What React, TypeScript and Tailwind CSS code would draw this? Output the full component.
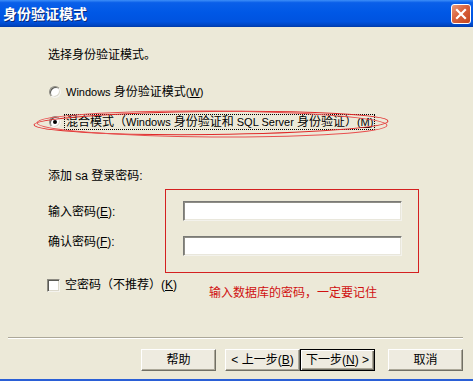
import React from "react";

const font = { fontFamily: '"Liberation Sans", "Noto Sans CJK SC", sans-serif' };

function Radio({ checked }: { checked?: boolean }) {
  return (
    <span className="relative w-[12px] h-[12px] shrink-0 rounded-full bg-white border border-t-[#8d8b82] border-l-[#8d8b82] border-r-[#f4f3ee] border-b-[#f4f3ee] shadow-[inset_1px_1px_0_#5a5a55,inset_-1px_-1px_0_#dcd9cc]">
      {checked && <span className="absolute left-[3px] top-[3px] w-[4px] h-[4px] rounded-full bg-black" />}
    </span>
  );
}

function Field() {
  return (
    <div className="w-[219px] h-[20px] bg-white border border-t-[#7a7a76] border-l-[#7a7a76] border-r-[#f3f2ec] border-b-[#f3f2ec] shadow-[inset_1px_1px_0_#8e8d86,inset_-1px_-1px_0_#e9e7dc]" />
  );
}

function Btn({ children, def, className = "" }: { children: React.ReactNode; def?: boolean; className?: string }) {
  const look = def
    ? "border border-black shadow-[inset_1px_1px_0_#fff,inset_-1px_-1px_0_#716f64,inset_-2px_-2px_0_#aca899]"
    : "border border-t-white border-l-white border-r-[#716f64] border-b-[#716f64] shadow-[inset_-1px_-1px_0_#aca899]";
  return (
    <div className={`w-[75px] h-[22px] flex items-center justify-center bg-[#eeebe0] text-[12px] text-black ${look} ${className}`}>
      {children}
    </div>
  );
}

export default function App() {
  return (
    <div className="relative w-[473px] h-[381px] bg-[#ece9d8] flex flex-col overflow-hidden text-[12px] text-black" style={font}>
      {/* Title bar */}
      <div className="h-[27px] shrink-0 flex items-center justify-between pl-[3px] pr-[2px] bg-[linear-gradient(to_bottom,#3d8ef8_0%,#0a5fe9_10%,#0058e6_45%,#0053df_80%,#0046c4_93%,#003aa8_100%)]">
        <span className="text-[14px] font-bold text-white leading-none [text-shadow:1px_1px_0_#0a2a7a]">
          身份验证模式
        </span>
        <div className="w-[20px] h-[20px] rounded-[3px] border border-white bg-[linear-gradient(135deg,#e99a7c_0%,#d9623d_45%,#c4451e_100%)] flex items-center justify-center">
          <svg width="12" height="12" viewBox="0 0 12 12">
            <path d="M2 2 L10 10 M10 2 L2 10" stroke="white" strokeWidth="2.2" strokeLinecap="square" />
          </svg>
        </div>
      </div>

      {/* Body */}
      <div className="flex-1 flex flex-col">
        <div className="pl-[48px] pt-[20px]">
          <div className="h-4 leading-4">选择身份验证模式。</div>

          <div className="mt-[21px] h-4 flex items-center gap-[5px] pl-[1px]">
            <Radio />
            <span className="leading-4">
              <span className="text-[11px]">Windows </span>身份验证模式<span className="text-[11px]">(<u>W</u>)</span>
            </span>
          </div>

          <div className="mt-[14px] h-4 flex items-center gap-[3px] pl-[1px]">
            <Radio checked />
            <span className="leading-[14px] px-[1px] border border-dotted border-black">
              混合模式（<span className="text-[11px]">Windows </span>身份验证和<span className="text-[11px]"> SQL Server </span>身份验证）
              <span className="text-[11px]">(<u>M</u>)</span>
            </span>
          </div>

          <div className="mt-[38px] h-4 leading-4">添加 sa 登录密码:</div>

          <div className="mt-[5px] flex">
            <div className="w-[117px] flex flex-col pt-[15px]">
              <div className="h-4 leading-4">
                输入密码(<u>E</u>):
              </div>
              <div className="h-4 leading-4 mt-[14px]">
                确认密码(<u>F</u>):
              </div>
            </div>
            <div className="w-[254px] h-[84px] border border-[#d42020] pl-[17px] pt-[11px] flex flex-col gap-[15px]">
              <Field />
              <Field />
            </div>
          </div>

          <div className="flex">
            <div className="w-[162px] mt-[4px] h-4 flex items-center gap-[5px] -ml-[1px]">
              <span className="w-[13px] h-[13px] bg-white border border-t-[#8d8b82] border-l-[#8d8b82] border-r-[#f4f3ee] border-b-[#f4f3ee] shadow-[inset_1px_1px_0_#5a5a55,inset_-1px_-1px_0_#dcd9cc]" />
              <span className="leading-4">
                空密码（不推荐）(<u>K</u>)
              </span>
            </div>
            <div className="mt-[12px] h-4 leading-4 text-[#d01010]">输入数据库的密码，一定要记住</div>
          </div>
        </div>

        {/* Footer */}
        <div className="mt-auto">
          <div className="ml-[8px] mr-[10px] border-t border-t-[#aca899] border-b border-b-white" />
          <div className="mt-[10px] mb-[8px] flex justify-end pr-[10px]">
            <Btn>帮助</Btn>
            <Btn className="ml-[9px]">
              &lt; 上一步(<u>B</u>)
            </Btn>
            <Btn def>
              下一步(<u>N</u>) &gt;
            </Btn>
            <Btn className="ml-[13px]">取消</Btn>
          </div>
        </div>
      </div>
      <div className="h-[2px] shrink-0 bg-[#2a5fd6]" />

      {/* Red annotation ellipse */}
      <svg className="absolute left-0 top-0 pointer-events-none" width="473" height="381" viewBox="0 0 473 381">
        <ellipse cx="211" cy="123" rx="177" ry="11.5" fill="none" stroke="#e02a2a" strokeWidth="1" transform="rotate(-0.6 211 123)" />
        <ellipse cx="212" cy="124" rx="175" ry="13" fill="none" stroke="#e85050" strokeWidth="1" transform="rotate(0.4 212 124)" />
      </svg>
    </div>
  );
}
